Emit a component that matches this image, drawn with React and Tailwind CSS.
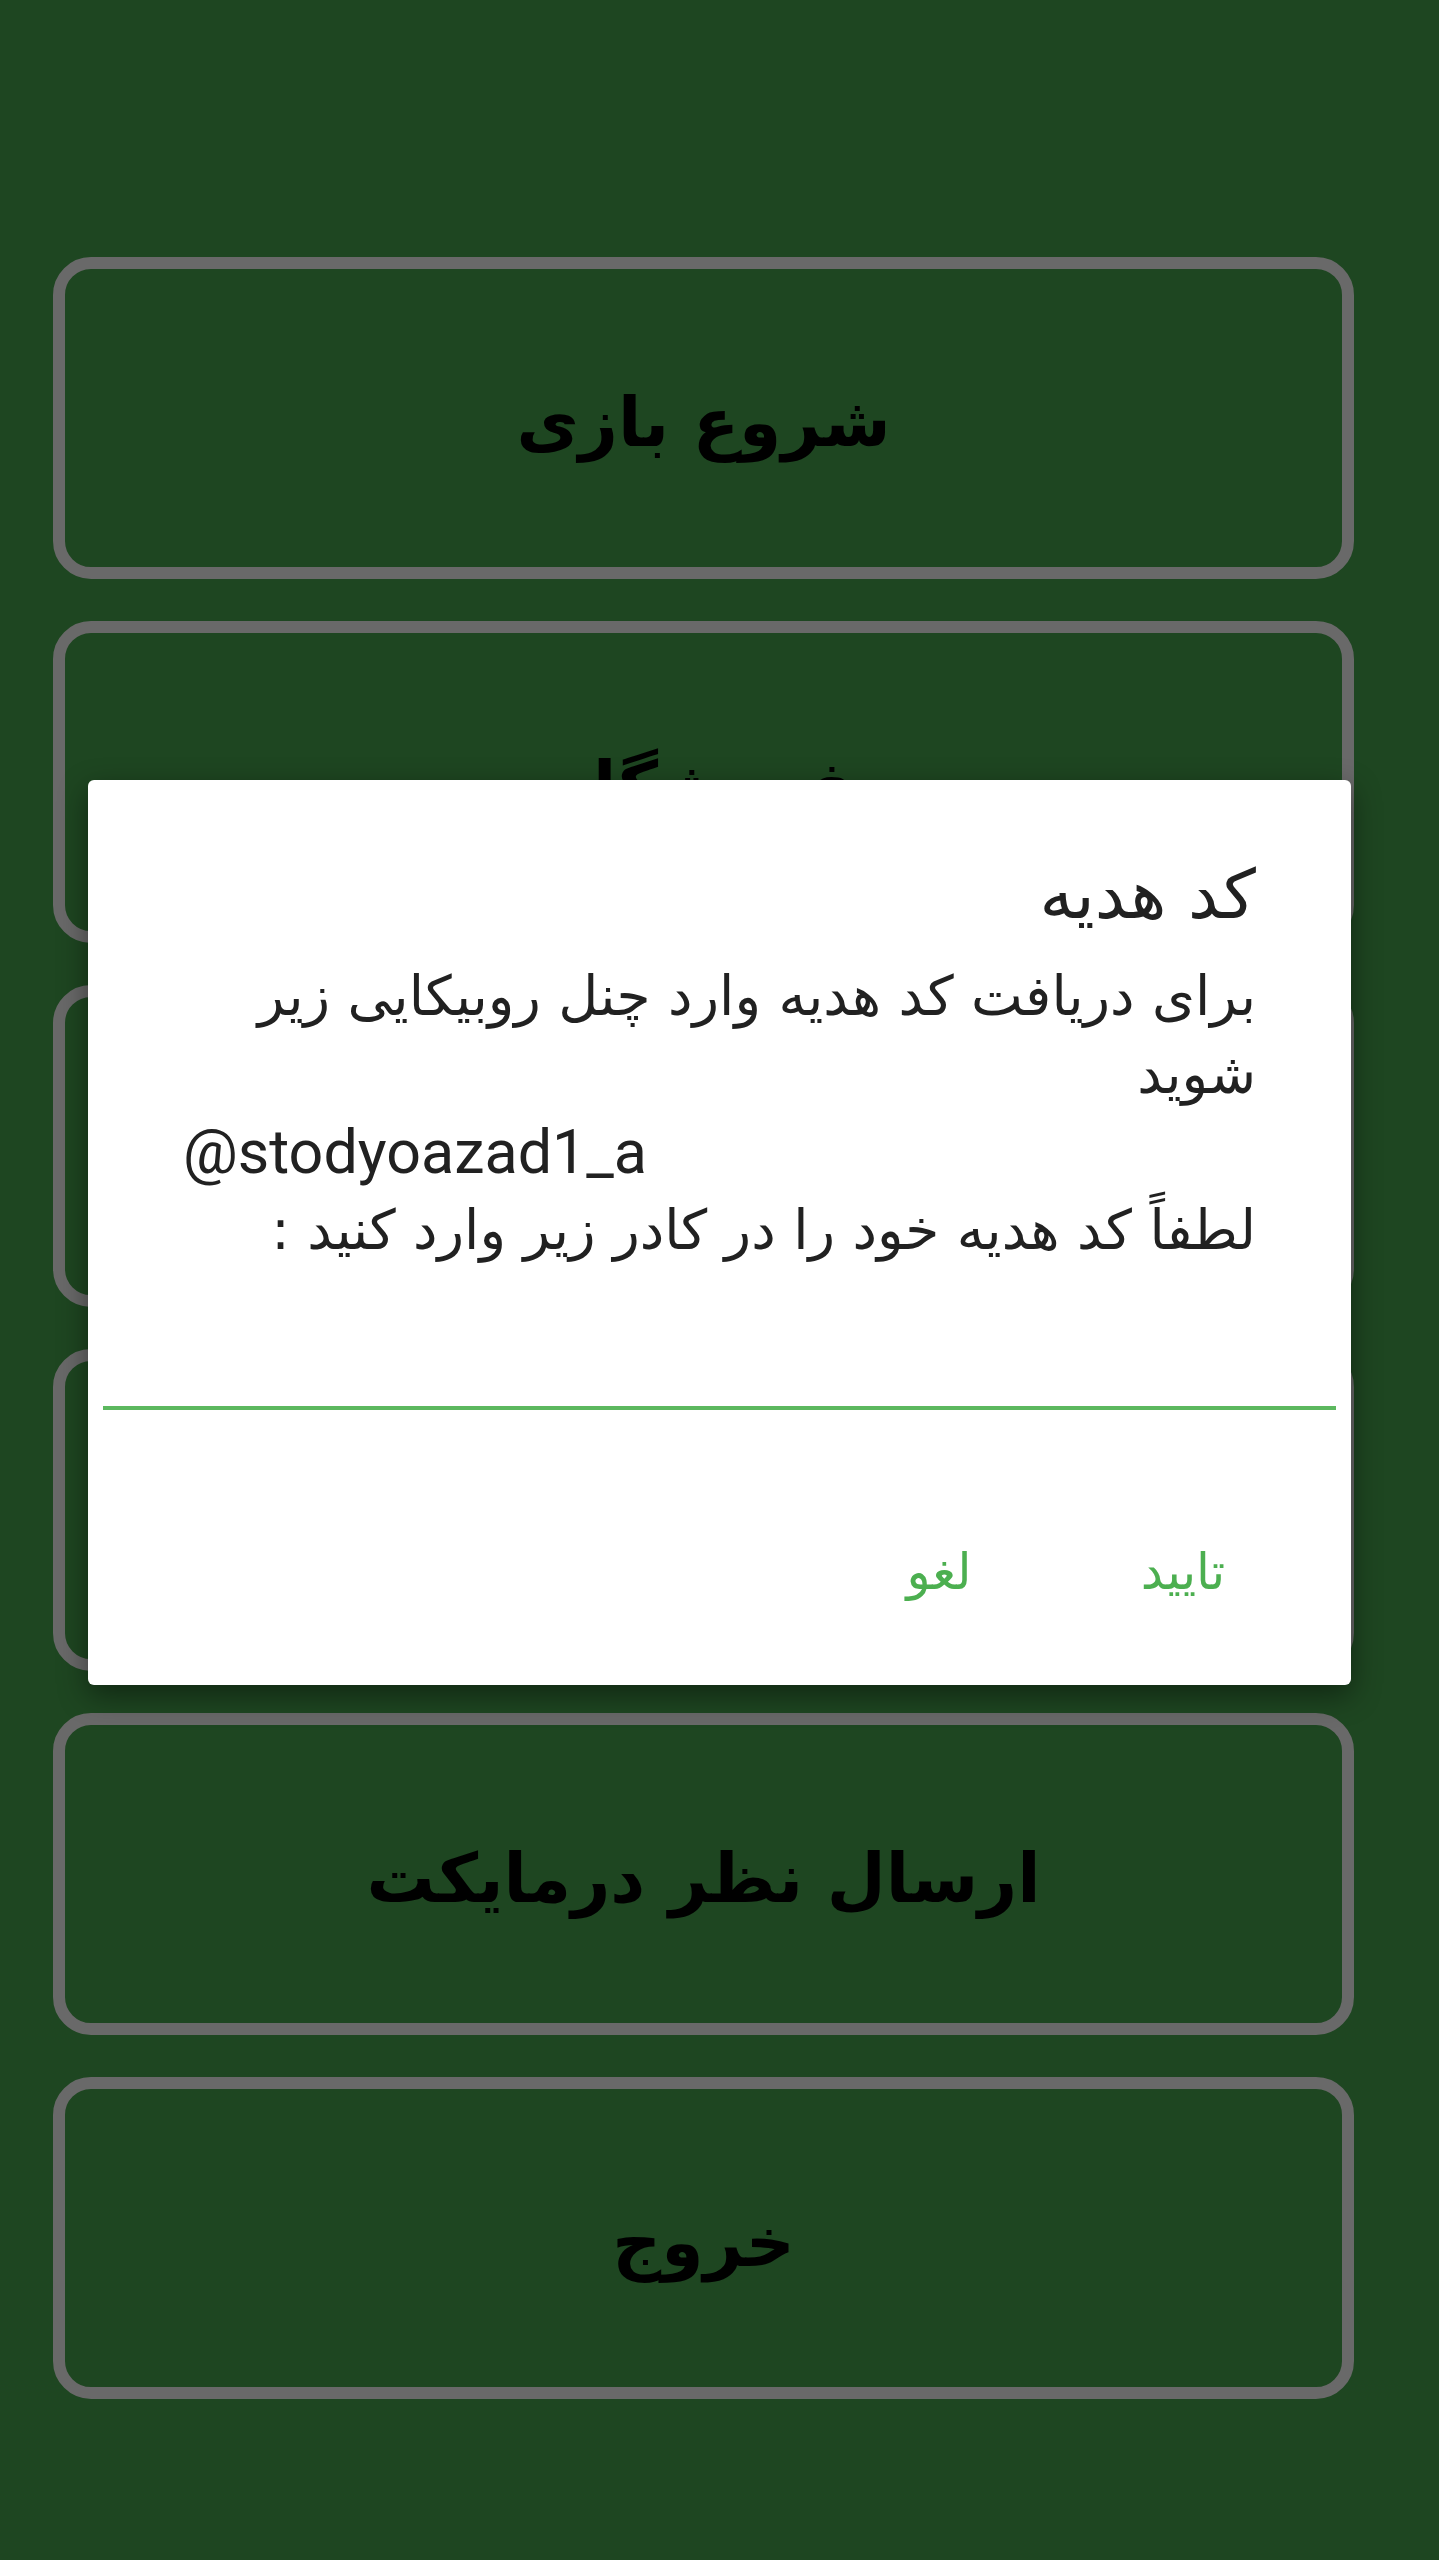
import React from 'react';

// main menu behind the dialog
const menuItems = ['شروع بازی', 'فروشگاه', 'تنظیمات', 'کد هدیه', 'ارسال نظر درمایکت', 'خروج'];

const App = () => {
  return (
    <div dir="rtl" className="relative min-h-[2560px] w-full bg-[#1e4621] font-['DejaVu_Sans',sans-serif]">
      <div className="flex flex-col gap-[42px] pl-[53px] pr-[85px] pt-[257px]">
        {menuItems.map((label) => (
          <button
            key={label}
            className="flex h-[322px] w-full items-center justify-center rounded-[38px] border-[12px] border-[#696969] pt-[10px] text-[68px] font-bold text-black"
          >
            {label}
          </button>
        ))}
      </div>

      {/* Gift code dialog */}
      <div className="absolute left-[88px] top-[780px] flex h-[905px] w-[1263px] flex-col rounded-[6px] bg-white shadow-[0_10px_30px_rgba(0,0,0,0.45)]">
        <div className="px-[95px] pt-[70px] text-[#212121]">
          <h2 className="text-[68px] leading-[90px] font-normal">کد هدیه</h2>
          <div className="mt-[17px] text-[55px] leading-[78px]">
            <p>
              برای دریافت کد هدیه وارد چنل روبیکایی زیر
              <br />
              شوید
            </p>
            <p dir="ltr" className="text-left font-['Roboto',sans-serif] text-[61px]">@stodyoazad1_a</p>
            <p>لطفاً کد هدیه خود را در کادر زیر وارد کنید :</p>
          </div>
        </div>

        <div className="px-[15px]">
          <input
            type="text"
            className="mt-[57px] h-[84px] w-full border-b-[4px] border-[#5cb85f] bg-transparent text-[58px] outline-none"
          />
        </div>

        <div className="mt-[78px] flex h-[168px] items-center gap-[44px] pr-[68px]">
          <button className="h-full w-[200px] text-[50px] text-[#4caf50]">تایید</button>
          <button className="h-full w-[200px] text-[50px] text-[#4caf50]">لغو</button>
        </div>
      </div>
    </div>
  );
};

export default App;
